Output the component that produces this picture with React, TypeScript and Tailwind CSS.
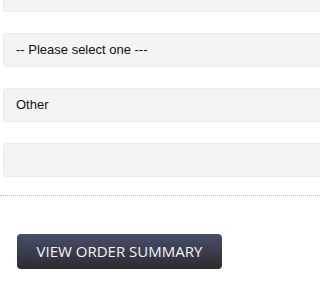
export default function App() {
  const fields = ["", "-- Please select one ---", "Other", ""];
  return (
    <div className="h-[288px] w-full overflow-hidden bg-white font-['Liberation_Sans',Arial,sans-serif]">
      <div className="-mt-[22px] flex flex-col gap-[21px] pl-[3px]">
        {fields.map((f, i) => (
          <div
            key={i}
            className="flex h-[34px] items-center rounded-l-[4px] border border-r-0 border-[#ebebeb] bg-[#f4f4f4] pl-3 text-[13px] text-[#111]"
          >
            {f}
          </div>
        ))}
      </div>
      <div className="mt-[18px] border-t border-dotted border-[#bdbdbd]" />
      <div className="pl-[17px] pt-[38px]">
        <button className="flex h-[35px] w-[205px] items-center justify-center rounded-[4px] bg-gradient-to-b from-[#484f6d] to-[#2b2b2f] font-['Open_Sans',sans-serif] text-[15px] font-medium text-[#f4f4f4]">
          VIEW ORDER SUMMARY
        </button>
      </div>
    </div>
  );
}
